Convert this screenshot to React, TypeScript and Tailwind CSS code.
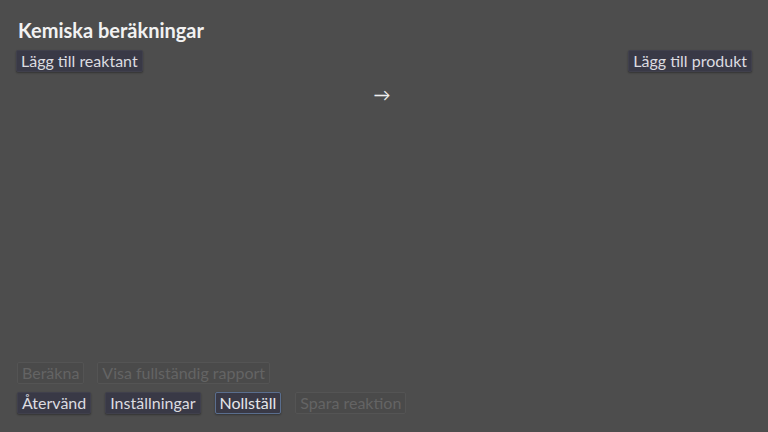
import type { ReactNode } from 'react';

function Btn({
  children,
  disabled,
  focused,
}: {
  children: ReactNode;
  disabled?: boolean;
  focused?: boolean;
}) {
  const base = 'h-[22px] px-[4px] rounded-[2px] text-[16px] leading-none flex items-center border';
  const style = disabled
    ? 'bg-[#4a4a4a] border-[#545454] text-[#646464]'
    : focused
      ? 'bg-[#393946] border-[#5a6e8e] text-[#e6e6ea] shadow-[0_1px_2px_rgba(0,0,0,0.35)]'
      : 'bg-[#393946] border-[#40404c] text-[#dcdce0] shadow-[0_1px_2px_rgba(0,0,0,0.35)]';
  return (
    <button disabled={disabled} className={`${base} ${style}`}>
      {children}
    </button>
  );
}

export default function App() {
  return (
    <div
      className="w-[768px] h-[432px] bg-[#4d4d4d] flex flex-col px-[16px] pt-[18px] pb-[18px] text-[#e6e6e6]"
      style={{ fontFamily: 'Lato, "Noto Sans", sans-serif' }}
    >
      {/* ------- title ------- */}
      <h1 className="text-[20px] font-bold leading-[24px] px-[2px] text-[#f2f2f2]">
        Kemiska beräkningar
      </h1>

      {/* ------- reaction row ------- */}
      <div className="mt-[8px] flex items-start justify-between">
        <Btn>Lägg till reaktant</Btn>
        <div className="pt-[36px] pr-[7px] text-[17px] leading-none text-[#eeeeee]">→</div>
        <Btn>Lägg till produkt</Btn>
      </div>

      <div className="flex-1" />

      {/* ------- actions ------- */}
      <div className="flex flex-col gap-[8px] pl-[1px]">
        <div className="flex gap-[13px]">
          <Btn disabled>Beräkna</Btn>
          <Btn disabled>Visa fullständig rapport</Btn>
        </div>
        <div className="flex gap-[14px]">
          <Btn>Återvänd</Btn>
          <Btn>Inställningar</Btn>
          <Btn focused>Nollställ</Btn>
          <Btn disabled>Spara reaktion</Btn>
        </div>
      </div>
    </div>
  );
}
